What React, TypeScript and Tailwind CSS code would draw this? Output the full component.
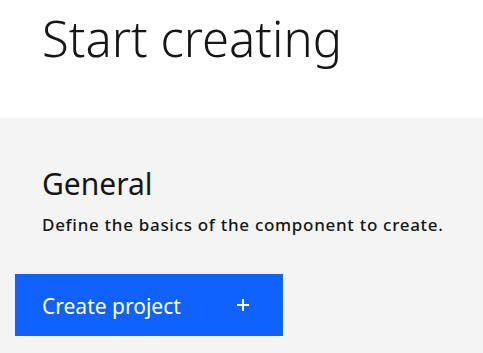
import React from "react";

export default function App() {
  return (
    <div
      className="w-[483px] h-[353px] flex flex-col bg-white overflow-hidden text-[#161616]"
      style={{ fontFamily: '"Noto Sans", "Open Sans", sans-serif' }}
    >
      <div className="h-[118px] shrink-0 bg-white pl-[42px] pt-[10px]">
        <h1 className="text-[49px] leading-[56px] font-light">Start creating</h1>
      </div>
      <div className="flex-1 bg-[#f4f4f4] flex flex-col">
        <div className="pl-[42px] pt-[48px]">
          <h2 className="text-[30px] leading-[36px] font-normal">General</h2>
          <p className="mt-[12px] text-[17px] leading-[22px] font-medium tracking-[0.7px]">
            Define the basics of the component to create.
          </p>
        </div>
        <button className="ml-[15px] mt-[38px] w-[268px] h-[62px] bg-[#0f62fe] text-white flex items-center pl-[27px] pr-[30px] justify-between">
          <span className="text-[21px] leading-[28px] font-normal relative top-[1px]">Create project</span>
          <svg width="14" height="14" viewBox="0 0 14 14" className="mr-[3px]">
            <path d="M7 1v12M1 7h12" stroke="white" strokeWidth="2" />
          </svg>
        </button>
      </div>
    </div>
  );
}
